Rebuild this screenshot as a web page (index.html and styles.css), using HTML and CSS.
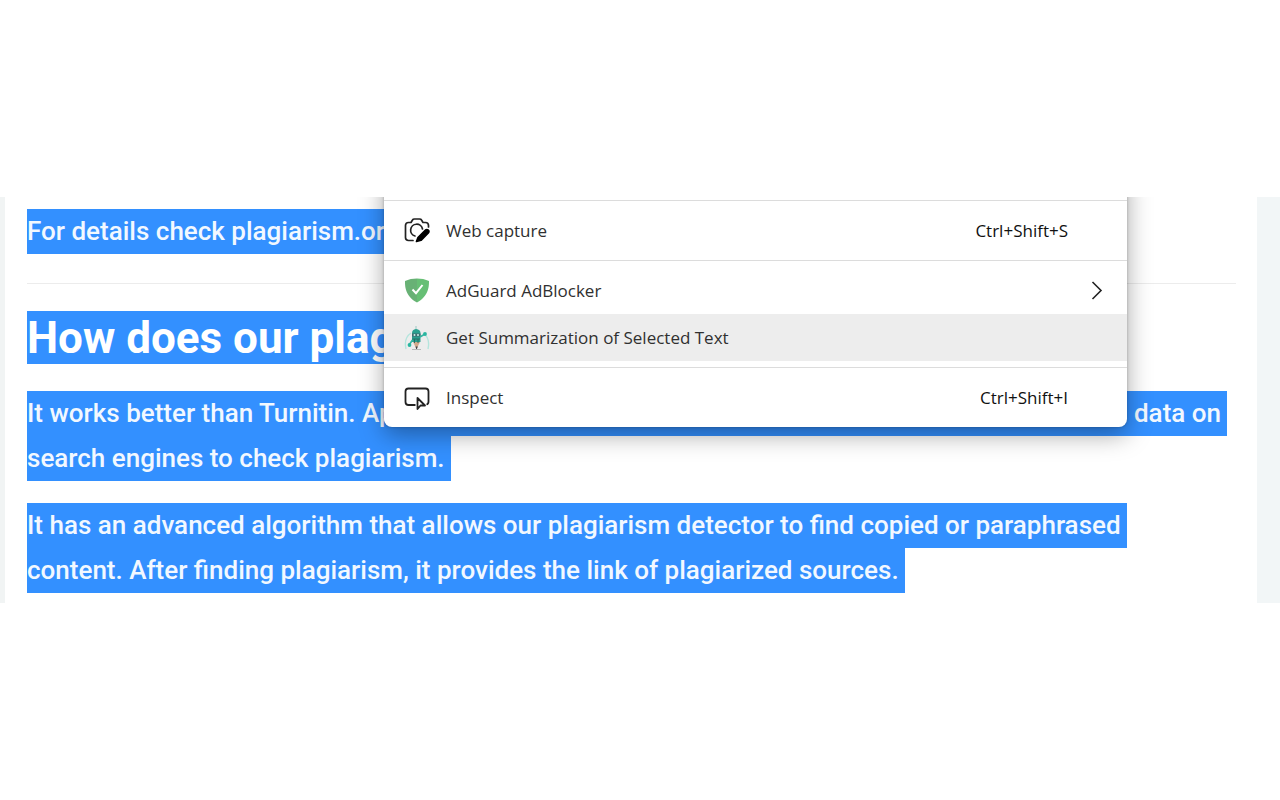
FILE: index.html
```html
<!DOCTYPE html>
<html lang="en">
<head>
  <meta charset="UTF-8">
  <meta name="viewport" content="width=device-width, initial-scale=1.0">
  <title>Plagiarism Checker</title>
  <link rel="stylesheet" href="styles.css">
</head>
<body>

  <main class="page">
    <article class="content">
      <p><span class="line">For details check plagiarism.or</span></p>
      <hr>
      <h2><span class="line">How does our plag</span></h2>
      <p>
        <span class="line wide"><span>It works better than Turnitin. Ap</span><span>data on</span></span>
        <span class="line">search engines to check plagiarism.</span>
      </p>
      <p>
        <span class="line">It has an advanced algorithm that allows our plagiarism detector to find copied or paraphrased</span>
        <span class="line">content. After finding plagiarism, it provides the link of plagiarized sources.</span>
      </p>
    </article>

    <!-- context menu -->
    <div class="menu" role="menu">
      <div class="separator"></div>
      <button class="item" role="menuitem">
        <svg class="icon" viewBox="0 0 26 26" fill="none" stroke="#222" stroke-width="1.7" stroke-linejoin="round" stroke-linecap="round">
          <path d="M9 22.500H4.500Q1.500 22.500 1.500 19.500V7.500Q1.500 4.500 4.500 4.500H7L8.500 2Q9 1 10.500 1H15.500Q17 1 17.500 2L19 4.500H21.500Q24.500 4.500 24.500 7.500V9"/>
          <path d="M11 18A6 6 0 1 1 18.500 11"/>
          <path d="M12.500 23.500L14 19.500L21.500 12Q23 11 24.300 12.200Q25.500 13.500 24.300 15L17 22.300Z" fill="#000" stroke="#000"/>
        </svg>
        <span class="label">Web capture</span>
        <span class="shortcut">Ctrl+Shift+S</span>
      </button>
      <div class="separator"></div>
      <button class="item" role="menuitem">
        <svg class="icon" viewBox="0 0 26 26">
          <path d="M13 .5C9 .5 4.500 1.300 1 3C1 7.500 .8 18 13 24.500Z" fill="#68b175"/>
          <path d="M13 .5C17 .5 21.500 1.300 25 3C25 7.500 25.200 18 13 24.500Z" fill="#67bf75"/>
          <path d="M8.500 11.500L12 15.200L18.500 7" fill="none" stroke="#fff" stroke-width="2"/>
        </svg>
        <span class="label">AdGuard AdBlocker</span>
        <svg class="arrow" viewBox="0 0 12 20" fill="none" stroke="#222" stroke-width="1.6">
          <path d="M1.500 1L10 9.500L1.500 18"/>
        </svg>
      </button>
      <button class="item active" role="menuitem">
        <svg class="icon" viewBox="0 0 26 26" fill="none">
          <path d="M2 24Q-.5 13 7 8M19 8Q26.500 13 24 24" stroke="#b5e5dd" stroke-width="1.4"/>
          <path d="M12 1V5" stroke="#9bc9c3"/>
          <path d="M8 8Q8 4.500 12 4Q16.500 4.500 16.500 8V17H8Z" fill="#2aa08f"/>
          <path d="M8 8.500H16.500V11.500H8Z" fill="#406b70"/>
          <circle cx="10.500" cy="10" r="1" fill="#c7f2ea"/>
          <circle cx="14" cy="10" r="1" fill="#c7f2ea"/>
          <path d="M16 12L21 9M8.500 15L5 20" stroke="#35b6a3" stroke-width="1.600"/>
          <circle cx="21" cy="9" r="1.900" fill="#28b6a0"/>
          <circle cx="5.500" cy="20" r="1.900" fill="#28b6a0"/>
          <path d="M9 17H16L12.500 24Z" fill="#d3a98b"/>
          <path d="M11.500 21.500H13.800L12.500 25Z" fill="#444"/>
          <path d="M8.500 14H16M10.500 14V18M14 14V18" stroke="#266e66"/>
          <path d="M8 24.500H17" stroke="#b9b9b9"/>
        </svg>
        <span class="label">Get Summarization of Selected Text</span>
      </button>
      <div class="separator"></div>
      <button class="item" role="menuitem">
        <svg class="icon" viewBox="0 0 26 26" fill="none" stroke="#222" stroke-width="1.800" stroke-linejoin="round">
          <path d="M11.500 20H4.500Q1.500 20 1.500 17V6.500Q1.500 3.500 4.500 3.500H21.500Q24.500 3.500 24.500 6.500V16.500Q24.500 19 22.500 19.500"/>
          <path d="M13.500 13V24L16.500 20.500H21Z"/>
        </svg>
        <span class="label">Inspect</span>
        <span class="shortcut">Ctrl+Shift+I</span>
      </button>
    </div>
  </main>

</body>
</html>
```
FILE: styles.css
```css
* {
  box-sizing: border-box;
}
body {
  margin: 0;
  min-height: 100vh;
  display: flex;
  flex-direction: column;
  justify-content: center;
  background-color: #fff;
  font-family: Roboto, sans-serif;
}
.page {
  position: relative;
  overflow: hidden;
  border-left: 5px solid #f1f4f4;
  border-right: 23px solid #f2f6f7;
}
.content {
  padding: 12px 21px 10px 22px;
  font-size: 26px;
  font-weight: 500;
  line-height: 45px;
  color: #f2f8ff;
}
.content p {
  margin: 0 0 22px;
}
.content p:last-child {
  margin-bottom: 0;
}
.content hr {
  margin: 29px 0 27px;
  border: 0;
  border-top: 1px solid #ececec;
}
.content h2 {
  margin: 0 0 27px;
  font-size: 44px;
  line-height: 51px;
  color: #fff;
}
.content h2 .line {
  padding-top: 2px;
}
.line {
  display: block;
  width: fit-content;
  padding-right: 6px;
  background-color: #3390ff;
}
.line.wide {
  display: flex;
  justify-content: space-between;
  width: auto;
  margin-right: 9px;
}

/* the top of the menu runs out of the page */
.menu {
  position: absolute;
  top: -30px;
  left: 379px;
  right: 130px;
  padding: 33px 0 6px;
  background-color: #fff;
  border-radius: 8px;
  box-shadow: 0 8px 24px rgba(0, 0, 0, 0.35), 0 0 3px rgba(0, 0, 0, 0.25);
}
.separator {
  height: 1px;
  margin-bottom: 6px;
  background-color: #dcdcdc;
}
.item + .separator {
  margin-top: 6px;
}
.item {
  display: flex;
  align-items: center;
  width: 100%;
  height: 47px;
  padding: 0 24px 0 20px;
  border: 0;
  background-color: transparent;
  font-family: "Open Sans", sans-serif;
  font-size: 17px;
  color: #303030;
  text-align: left;
}
.item.active,
.item:hover {
  background-color: #ededed;
}
.icon {
  width: 26px;
  height: 26px;
  margin-right: 16px;
}
.label {
  flex: 1;
}
.shortcut {
  margin-right: 35px;
  color: #111;
}
.arrow {
  width: 12px;
  height: 20px;
}
```
